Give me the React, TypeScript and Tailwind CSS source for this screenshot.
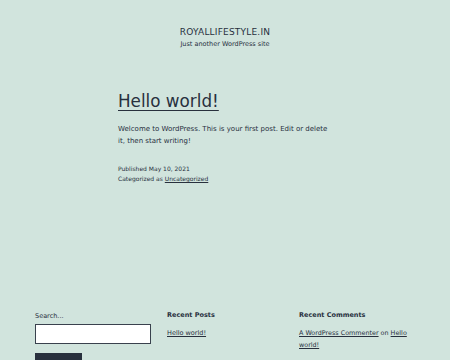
export default function App() {
  return (
    <div className="min-h-[360px] h-[360px] overflow-hidden bg-[#d1e4dd] text-[#28303d] font-['DejaVu_Sans',sans-serif]">
      <header className="pt-[27px] flex flex-col items-center">
        <div className="text-[9px] leading-[11px] tracking-[0.2px]">ROYALLIFESTYLE.IN</div>
        <div className="text-[6.5px] leading-[10px] mt-[1px]">Just another WordPress site</div>
      </header>

      <main className="w-[214px] ml-[118px] mt-[42px]">
        <h1 className="text-[16.8px] leading-[20px] font-normal underline decoration-[1px] underline-offset-[3px]">
          Hello world!
        </h1>
        <p className="mt-[12px] text-[7px] leading-[12px]">
          Welcome to WordPress. This is your first post. Edit or delete it, then start writing!
        </p>
        <div className="mt-[17px] text-[6px] leading-[10px]">
          <div>Published May 10, 2021</div>
          <div>
            Categorized as <span className="underline">Uncategorized</span>
          </div>
        </div>
      </main>

      <footer className="mt-[126px] mx-[35px] grid grid-cols-3 gap-[16px]">
        <div>
          <div className="text-[6.5px] leading-[10px] mt-[1px]">Search...</div>
          <div className="mt-[3px] h-[20px] w-[116px] bg-white border-[1.5px] border-[#39414d]"></div>
          <div className="mt-[9px] h-[12px] w-[47px] bg-[#28303d]"></div>
        </div>
        <div>
          <div className="text-[6.5px] leading-[10px] font-bold">Recent Posts</div>
          <div className="mt-[7px] text-[6.5px] leading-[12px] underline">Hello world!</div>
        </div>
        <div>
          <div className="text-[6.5px] leading-[10px] font-bold">Recent Comments</div>
          <div className="mt-[7px] text-[6.4px] leading-[12px]">
            <span className="underline">A WordPress Commenter</span> on{" "}
            <span className="underline">Hello world!</span>
          </div>
        </div>
      </footer>
    </div>
  );
}
